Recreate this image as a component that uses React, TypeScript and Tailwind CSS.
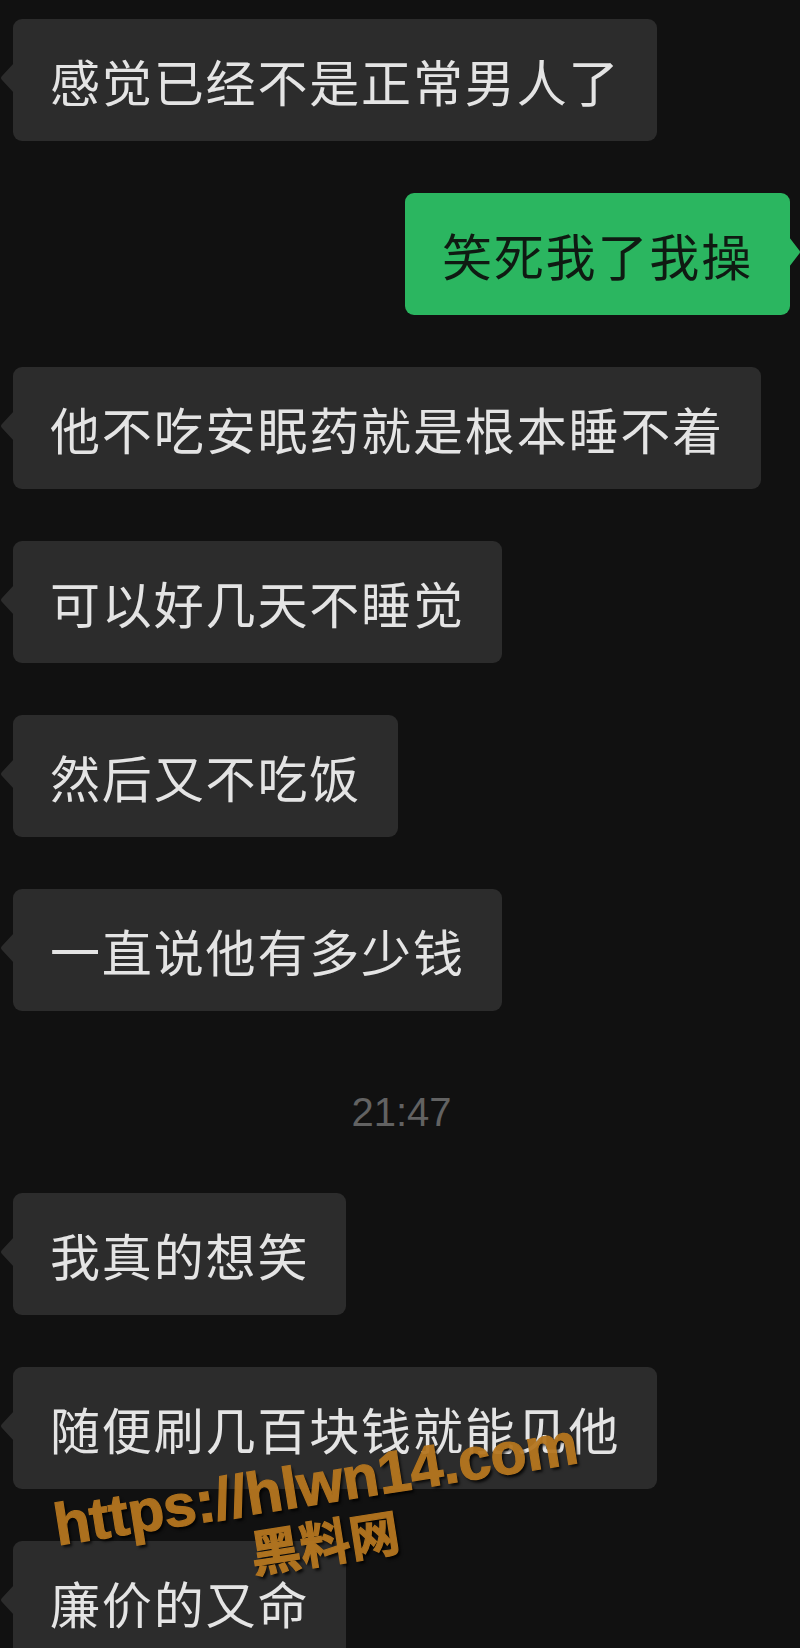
import React from "react";

const cjk = { fontFamily: '"Noto Sans CJK SC", "Noto Sans", sans-serif' };

function LeftBubble({ text }: { text: string }) {
  return (
    <div className="relative self-start">
      <svg
        className="absolute left-[-13px] top-[44px]"
        width="14"
        height="30"
        viewBox="0 0 14 30"
      >
        <path d="M14 0 L2 13 Q0 15 2 17 L14 30 Z" fill="#2c2c2c" />
      </svg>
      <div
        className="flex h-[122px] items-center rounded-[9px] bg-[#2c2c2c] px-[37px] text-[50px] leading-[60px] tracking-[1.85px] text-[#e4e4e4]"
        style={cjk}
      >
        {text}
      </div>
    </div>
  );
}

function RightBubble({ text }: { text: string }) {
  return (
    <div className="relative self-end">
      <svg
        className="absolute right-[-11px] top-[44px]"
        width="12"
        height="30"
        viewBox="0 0 12 30"
      >
        <path d="M0 0 L10 13 Q12 15 10 17 L0 30 Z" fill="#2bb660" />
      </svg>
      <div
        className="flex h-[122px] items-center rounded-[9px] bg-[#2bb660] px-[37px] text-[50px] leading-[60px] tracking-[1.85px] text-[#0f1a12]"
        style={cjk}
      >
        {text}
      </div>
    </div>
  );
}

export default function App() {
  return (
    <div className="relative h-[1648px] w-[800px] overflow-hidden bg-[#111111]">
      <div className="flex flex-col gap-[52px] pl-[13px] pr-[10px] pt-[19px]">
        <LeftBubble text="感觉已经不是正常男人了" />
        <RightBubble text="笑死我了我操" />
        <LeftBubble text="他不吃安眠药就是根本睡不着" />
        <LeftBubble text="可以好几天不睡觉" />
        <LeftBubble text="然后又不吃饭" />
        <LeftBubble text="一直说他有多少钱" />
        <div
          className="h-[78px] pt-[25px] text-center text-[40px] leading-[48px] text-[#626262]"
          style={{ fontFamily: '"Liberation Sans", Arial, sans-serif' }}
        >
          21:47
        </div>
        <LeftBubble text="我真的想笑" />
        <LeftBubble text="随便刷几百块钱就能见他" />
        <LeftBubble text="廉价的又命" />
      </div>

      <div className="pointer-events-none absolute left-[320px] top-[1512px] flex -translate-x-1/2 -translate-y-1/2 rotate-[-9deg] flex-col items-center whitespace-nowrap font-bold text-[#b5761f] opacity-95 [-webkit-text-stroke:1.2px_#b5761f] [text-shadow:2px_3px_3px_rgba(0,0,0,0.85)]">
        <div
          className="text-[59px] leading-[56px] tracking-[-0.3px]"
          style={{ fontFamily: '"Liberation Sans", Arial, sans-serif' }}
        >
          https://hlwn14.com
        </div>
        <div className="text-[50px] leading-[56px]" style={cjk}>
          黑料网
        </div>
      </div>
    </div>
  );
}
